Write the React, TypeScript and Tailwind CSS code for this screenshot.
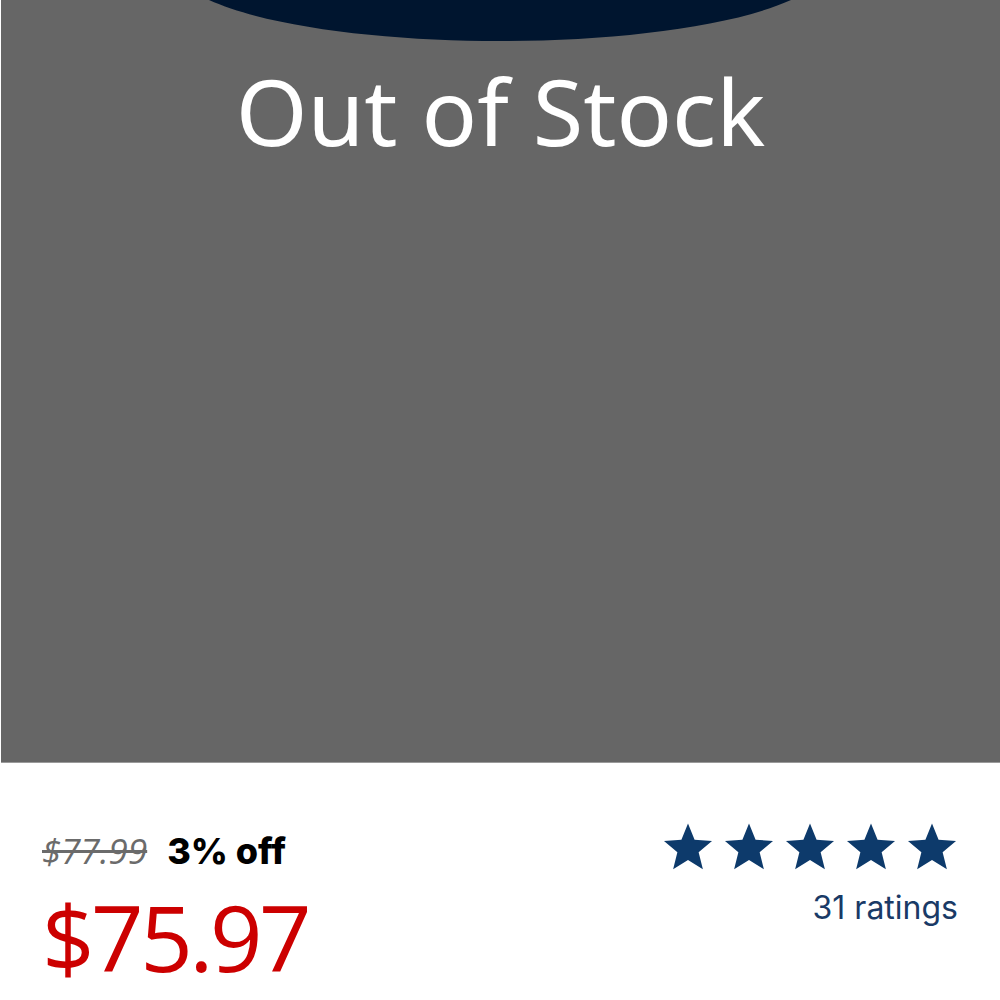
function Stars({ count }: { count: number }) {
  return (
    <div className="flex gap-[9px]">
      {Array.from({ length: count }).map((_, i) => (
        <svg key={i} viewBox="0 0 24 24" className="w-[52px] h-[51px]" fill="#0d3a6b">
          <path d="M12 1.2l3.1 7.6 8.2.6-6.3 5.3 2 8-7-4.4-7 4.4 2-8L.7 9.4l8.2-.6z" />
        </svg>
      ))}
    </div>
  );
}

export default function App() {
  return (
    <div className="w-[1000px] h-[1000px] bg-white overflow-hidden" style={{ fontFamily: "'Open Sans', sans-serif" }}>
      <div className="relative ml-px h-[763px] bg-[#666666] border-b border-[#9a9a9a]">
        <svg className="absolute left-0 top-0" width="999" height="60" viewBox="0 0 999 60">
          <path d="M208 0 C270 28 390 41 499 41 C608 41 728 28 790 0 Z" fill="#00152f" />
        </svg>
        <div className="relative pt-[56px] text-center text-white text-[92px] leading-[1.2]" style={{ fontFamily: "'Noto Sans', sans-serif" }}>
          Out of Stock
        </div>
      </div>
      <div className="flex justify-between px-[42px] pt-[70px]">
        <div className="flex flex-col">
          <div className="flex items-baseline gap-[20px]">
            <span className="text-[35px] text-[#6b6b6b] line-through italic leading-none">$77.99</span>
            <span className="text-[36px] font-extrabold text-black leading-none" style={{ fontFamily: "Inter, sans-serif" }}>3% off</span>
          </div>
          <div className="mt-[22px] text-[92px] text-[#cc0000] leading-none tracking-[-3.5px]">
            $75.97
          </div>
        </div>
        <div className="flex flex-col items-end -mt-[12px]">
          <Stars count={5} />
          <span className="mt-[20px] text-[32px] text-[#1a3a66] leading-none" style={{ fontFamily: "Inter, sans-serif" }}>31 ratings</span>
        </div>
      </div>
    </div>
  );
}
